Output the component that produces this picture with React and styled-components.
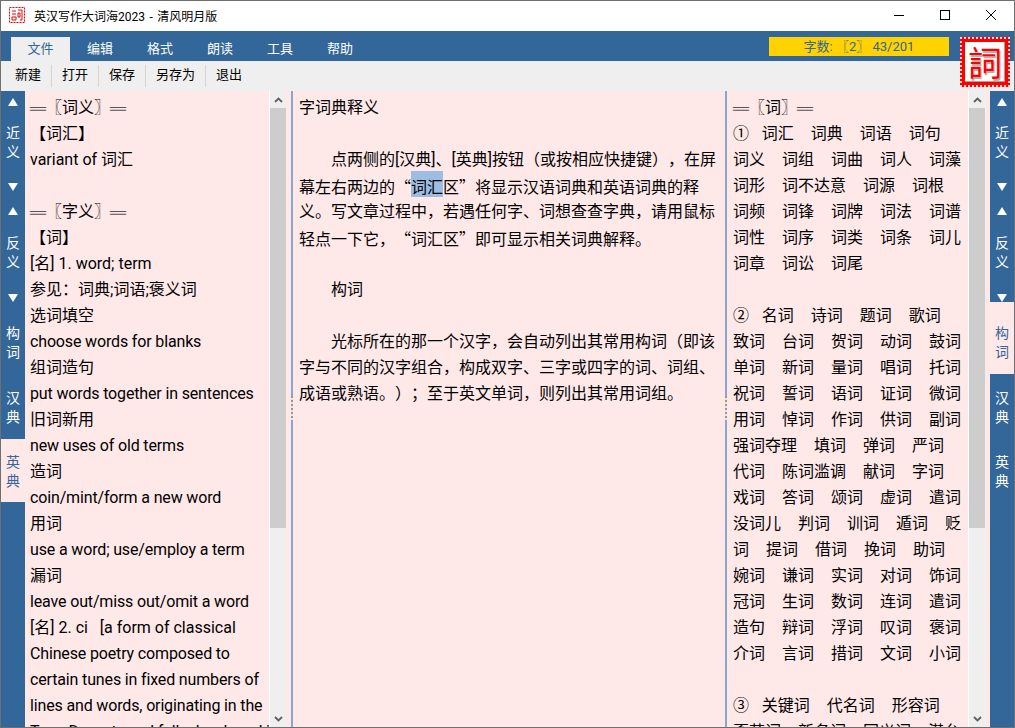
import React from 'react'
import styled, { createGlobalStyle } from 'styled-components'

const GlobalStyle = createGlobalStyle`
html, body {
    margin: 0;
    height: 100%;
    overflow: hidden;
}
#root {
    height: 100%;
}
`

const FONT = `Roboto, "Noto Sans CJK SC", sans-serif`
const CJK = `"Noto Sans CJK SC", sans-serif`
const BLUE = '#336699'
const PINK = '#ffe8e8'

const Window = styled.div`
display: grid;
grid-template-rows: 30px 30px 30px 1fr;
box-sizing: border-box;
width: 1015px;
height: 728px;
border: 1px solid #6f6f6f;
font-family: ${FONT};
text-spacing-trim: space-all;
color: #000;
overflow: hidden;
`

const TitleBar = styled.div`
display: flex;
align-items: center;
background: #fff;
padding: 0 0 2px 8px;
`

const AppTitle = styled.div`
margin-left: 9px;
font-size: 12px;
word-spacing: 1.5px;
`

const WindowButtons = styled.div`
display: flex;
margin-left: auto;
`

const WindowButton = styled.div`
display: flex;
align-items: center;
justify-content: center;
width: 46px;
height: 28px;
`

const MenuBar = styled.div`
display: flex;
align-items: flex-end;
background: ${BLUE};
padding-left: 10px;
`

const MenuTab = styled.div`
width: ${p => (p.$active ? 59 : 60)}px;
height: 24px;
line-height: 24px;
text-align: center;
font-size: 13px;
color: ${p => (p.$active ? BLUE : '#fff')};
background: ${p => (p.$active ? '#efefef' : 'transparent')};
`

const Counter = styled.div`
align-self: flex-start;
width: 180px;
height: 19px;
margin: 6px 65px 0 auto;
line-height: 19px;
text-align: center;
font-size: 13px;
color: ${BLUE};
background: #ffd200;
`

const Seal = styled.div`
position: absolute;
top: 37px;
left: 960px;
box-sizing: border-box;
width: 50px;
height: 50px;
padding: 3px;
border: 2px dotted #ffd0d0;
background: #f00;
`

const SealFace = styled.div`
display: flex;
align-items: center;
justify-content: center;
height: 100%;
background: #fff;
box-shadow: inset -1px -1px 1px #999;
color: #f00;
font-family: ${CJK};
font-size: 34px;
line-height: 1;
text-shadow: 1px 2px 1px #aaa;
`

const ToolBar = styled.div`
display: flex;
align-items: center;
background: #efefef;
padding-left: 4px;
`

const ToolButton = styled.div`
padding: 0 10px;
height: 22px;
line-height: 20px;
font-size: 13px;
border-left: ${p => (p.$first ? 0 : '1px solid #d4d4d4')};
`

const Body = styled.div`
display: grid;
grid-template-columns: 24px 266px 2px 432px 2px 263px 24px;
min-height: 0;
background: ${PINK};
`

const Rail = styled.div`
display: flex;
flex-direction: column;
background: ${BLUE};
min-height: 0;
`

const RailGroup = styled.div`
display: flex;
flex-direction: column;
align-items: center;
height: ${p => p.$height}px;
padding-top: ${p => p.$top || 0}px;
box-sizing: border-box;
flex-shrink: 0;
color: ${p => (p.$active ? BLUE : '#fff')};
background: ${p => (p.$active ? PINK : 'transparent')};
font-size: 14px;
line-height: 19px;
`

const Arrow = styled.div`
width: 0;
height: 0;
border-left: 5.5px solid transparent;
border-right: 5.5px solid transparent;
border-${p => (p.$down ? 'top' : 'bottom')}: 8px solid #fff;
flex-shrink: 0;
`

const RailLabel = styled.div`
margin: ${p => p.$margin || 0};
width: 14px;
text-align: center;
`

const Pane = styled.div`
position: relative;
display: flex;
min-width: 0;
min-height: 0;
overflow: hidden;
`

const PaneText = styled.div`
flex: 1;
min-width: 0;
padding: 4px 0 0 ${p => p.$left}px;
font-size: 16px;
line-height: 26px;
white-space: pre;
word-spacing: ${p => p.$wordGap || 0}px;
`

const Line = styled.div`
height: 26px;
letter-spacing: ${p => (p.$latin ? '-0.15px' : 'normal')};
`

const Rule = styled.span`
font-family: "Liberation Mono", monospace;
font-size: 13.33px;
font-weight: 700;
color: #555;
`

const Quote = styled.span`
font-family: ${CJK};
`

const Mark = styled.span`
display: inline-block;
height: 26px;
background: linear-gradient(#9dbde2 0 22px, transparent 22px);
box-shadow: 0 -4px 0 #9dbde2;
`

const Divider = styled.div`
position: relative;
background: #8ba6cb;
`

const Grip = styled.div`
position: absolute;
top: 305px;
left: 0;
width: 2px;
height: 24px;
background: repeating-linear-gradient(#999 0 2px, #f1e3d5 2px 4px);
`

const ScrollTrack = styled.div`
display: grid;
grid-template-rows: 17px 1fr 17px;
width: 16px;
margin-right: 5px;
background: #efefef;
border-left: 1px solid #fff;
flex-shrink: 0;
`

const ScrollEnd = styled.div`
display: flex;
align-items: center;
justify-content: center;
`

const ScrollThumb = styled.div`
background: #cdcdcd;
height: ${p => p.$height}px;
`

const Chevron = ({ down }) => (
    <svg width="9" height="6" viewBox="0 0 9 6">
        <path d={down ? 'M1 1l3.5 3.5L8 1' : 'M1 5l3.5-3.5L8 5'} fill="none" stroke="#606060" strokeWidth="1.8" />
    </svg>
)

const Scroll = ({ thumb }) => (
    <ScrollTrack>
        <ScrollEnd><Chevron /></ScrollEnd>
        <div><ScrollThumb $height={thumb} /></div>
        <ScrollEnd><Chevron down /></ScrollEnd>
    </ScrollTrack>
)

const heading = word => <><Rule>══</Rule>〖{word}〗<Rule>══</Rule></>

const leftLines = [
    heading('词义'), '【词汇】', 'variant of 词汇', '', heading('字义'), '【词】', '[名] 1. word; term',
    '参见：词典;词语;褒义词', '选词填空', 'choose words for blanks', '组词造句', 'put words together in sentences',
    '旧词新用', 'new uses of old terms', '造词', 'coin/mint/form a new word', '用词', 'use a word; use/employ a term',
    '漏词', 'leave out/miss out/omit a word', '[名] 2. ci   [a form of classical', 'Chinese poetry composed to',
    'certain tunes in fixed numbers of', 'lines and words, originating in the', 'Tang Dynasty and fully developed in',
]

const rightLines = [
    heading('词'), '①   词汇    词典    词语    词句', '词义    词组    词曲    词人    词藻', '词形    词不达意    词源    词根',
    '词频    词锋    词牌    词法    词谱', '词性    词序    词类    词条    词儿', '词章    词讼    词尾', '',
    '②   名词    诗词    题词    歌词', '致词    台词    贺词    动词    鼓词', '单词    新词    量词    唱词    托词',
    '祝词    誓词    语词    证词    微词', '用词    悼词    作词    供词    副词', '强词夺理    填词    弹词    严词',
    '代词    陈词滥调    献词    字词', '戏词    答词    颂词    虚词    遣词', '没词儿    判词    训词    遁词    贬',
    '词    提词    借词    挽词    助词', '婉词    谦词    实词    对词    饰词', '冠词    生词    数词    连词    遣词',
    '造句    辩词    浮词    叹词    褒词', '介词    言词    措词    文词    小词', '',
    '③   关键词    代名词    形容词', '歪若词    新名词    同义词    潜台',
]

const isLatin = text => typeof text === 'string' && /^[\x20-\x7e]+$/.test(text)

const RailBlock = ({ active }) => {
    const item = (name, height, top) => (
        <RailGroup key={name} $height={height} $top={top} $active={active === name}>
            <RailLabel>{name[0]}</RailLabel>
            <RailLabel>{name[1]}</RailLabel>
        </RailGroup>
    )
    return (
        <Rail>
            <RailGroup $height={110} $top={7}>
                <Arrow />
                <RailLabel $margin="18px 0 0">近</RailLabel>
                <RailLabel $margin="0 0 21px">义</RailLabel>
                <Arrow $down />
            </RailGroup>
            <RailGroup $height={101} $top={6}>
                <Arrow />
                <RailLabel $margin="19px 0 0">反</RailLabel>
                <RailLabel $margin="0 0 22px">义</RailLabel>
                <Arrow $down />
            </RailGroup>
            {item('构词', 72, 22)}
            {item('汉典', 65, 15)}
            {item('英典', 63, 14)}
        </Rail>
    )
}

export default function App() {
    return (
        <Window>
            <GlobalStyle />
            <TitleBar>
                <svg width="16" height="16" viewBox="0 0 16 16">
                    <rect x="0.5" y="0.5" width="15" height="15" fill="#fff" stroke="#e00" strokeDasharray="2 1" />
                    <path d="M3 4h4M3 7h4M3 10h4v3H3zM9 3h4v10h-2M9 6h2v4H9z" fill="none" stroke="#e00" />
                </svg>
                <AppTitle>英汉写作大词海2023 - 清风明月版</AppTitle>
                <WindowButtons>
                    <WindowButton>
                        <svg width="10" height="10" viewBox="0 0 10 10"><path d="M0 5.5h10" stroke="#000" /></svg>
                    </WindowButton>
                    <WindowButton>
                        <svg width="10" height="10" viewBox="0 0 10 10"><rect x=".5" y=".5" width="9" height="9" fill="none" stroke="#000" /></svg>
                    </WindowButton>
                    <WindowButton>
                        <svg width="10" height="10" viewBox="0 0 10 10"><path d="M0 0l10 10M10 0L0 10" stroke="#000" /></svg>
                    </WindowButton>
                </WindowButtons>
            </TitleBar>
            <MenuBar>
                {['文件', '编辑', '格式', '朗读', '工具', '帮助'].map((name, i) => (
                    <MenuTab key={name} $active={i === 0}>{name}</MenuTab>
                ))}
                <Counter>字数: 〖2〗 43/201</Counter>
            </MenuBar>
            <Seal><SealFace>詞</SealFace></Seal>
            <ToolBar>
                {['新建', '打开', '保存', '另存为', '退出'].map((name, i) => (
                    <ToolButton key={name} $first={i === 0}>{name}</ToolButton>
                ))}
            </ToolBar>
            <Body>
                <RailBlock active="英典" />
                <Pane>
                    <PaneText $left={5}>
                        {leftLines.map((text, i) => <Line key={i} $latin={isLatin(text)}>{text}</Line>)}
                    </PaneText>
                    <Scroll thumb={420} />
                </Pane>
                <Divider><Grip /></Divider>
                <Pane>
                    <PaneText $left={6}>
                        <Line>字词典释义</Line>
                        <Line />
                        <Line>　　点两侧的[汉典]、[英典]按钮（或按相应快捷键），在屏</Line>
                        <Line>幕左右两边的<Quote>“</Quote><Mark>词汇</Mark>区<Quote>”</Quote>将显示汉语词典和英语词典的释</Line>
                        <Line>义。写文章过程中，若遇任何字、词想查查字典，请用鼠标</Line>
                        <Line>轻点一下它，<Quote>“</Quote>词汇区<Quote>”</Quote>即可显示相关词典解释。</Line>
                        <Line />
                        <Line>　　构词</Line>
                        <Line />
                        <Line>　　光标所在的那一个汉字，会自动列出其常用构词（即该</Line>
                        <Line>字与不同的汉字组合，构成双字、三字或四字的词、词组、</Line>
                        <Line>成语或熟语。）；至于英文单词，则列出其常用词组。</Line>
                    </PaneText>
                </Pane>
                <Divider><Grip /></Divider>
                <Pane>
                    <PaneText $left={6} $wordGap={0.28}>
                        {rightLines.map((text, i) => <Line key={i}>{text}</Line>)}
                    </PaneText>
                    <Scroll thumb={420} />
                </Pane>
                <RailBlock active="构词" />
            </Body>
        </Window>
    )
}
